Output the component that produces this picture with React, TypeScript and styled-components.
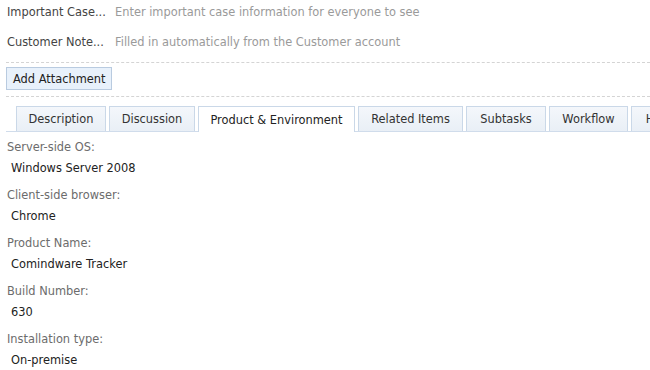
import React from "react";
import styled, { createGlobalStyle } from "styled-components";

const GlobalStyle = createGlobalStyle`
  body {
    margin: 0;
    background: #fff;
    font-family: "DejaVu Sans", Verdana, sans-serif;
    font-size: 11.4px;
    color: #333;
  }
`;

const Page = styled.div`
  width: 650px;
  height: 370px;
  overflow: hidden;
  padding: 0 0 0 6px;
  box-sizing: border-box;
`;

const InfoRow = styled.div`
  display: flex;
  align-items: flex-start;
  height: 30px;
  padding-top: 5px;
  box-sizing: border-box;
  line-height: 14px;
  white-space: nowrap;
`;

const InfoLabel = styled.div`
  width: 108px;
  padding-left: 1px;
  color: #444;
  flex-shrink: 0;
`;

const InfoValue = styled.div`
  color: #9a9a9a;
`;

const Divider = styled.div<{ $top: number }>`
  border-top: 1px dashed #d4d4d4;
  margin: ${(p) => p.$top}px 0 0 0;
`;

const ButtonRow = styled.div`
  padding: 4px 0 6px 0;
`;

const Button = styled.button`
  font-family: inherit;
  font-size: 11.4px;
  color: #222;
  background: #e8f1fb;
  border: 1px solid #b9cbe0;
  border-radius: 0;
  height: 23px;
  padding: 0 6px;
`;

const TabStrip = styled.div`
  display: flex;
  gap: 3px;
  margin-top: 9px;
  padding-left: 10px;
  border-bottom: 1px solid #d0dceb;
  white-space: nowrap;
`;

const Tab = styled.div<{ $active?: boolean; $w: number }>`
  flex-shrink: 0;
  width: ${(p) => p.$w}px;
  box-sizing: border-box;
  display: flex;
  align-items: center;
  justify-content: center;
  border: 1px solid #cad8e8;
  border-bottom: none;
  background: ${(p) =>
    p.$active ? "#fff" : "linear-gradient(#f4f7fb, #e9eff6)"};
  color: ${(p) => (p.$active ? "#222" : "#333")};
  margin-bottom: ${(p) => (p.$active ? "-1px" : "0")};
  height: ${(p) => (p.$active ? "26px" : "25px")};
  overflow: hidden;
`;

const Fields = styled.div`
  padding-top: 8px;
`;

const Field = styled.div`
  height: 48px;
  display: flex;
  flex-direction: column;
`;

const FieldLabel = styled.div`
  color: #6c6c6c;
  padding-left: 1px;
  line-height: 14px;
`;

const FieldValue = styled.div`
  color: #222;
  padding: 7px 0 0 5px;
  line-height: 14px;
`;

const tabs = [
  { name: "Description", w: 90 },
  { name: "Discussion", w: 86 },
  { name: "Product & Environment", w: 157, active: true },
  { name: "Related Items", w: 105 },
  { name: "Subtasks", w: 80 },
  { name: "Workflow", w: 79 },
  { name: "History", w: 70 },
];

const fields = [
  ["Server-side OS:", "Windows Server 2008"],
  ["Client-side browser:", "Chrome"],
  ["Product Name:", "Comindware Tracker"],
  ["Build Number:", "630"],
  ["Installation type:", "On-premise"],
];

export default function App() {
  return (
    <Page>
      <GlobalStyle />
      <InfoRow>
        <InfoLabel>Important Case...</InfoLabel>
        <InfoValue>Enter important case information for everyone to see</InfoValue>
      </InfoRow>
      <InfoRow>
        <InfoLabel>Customer Note...</InfoLabel>
        <InfoValue>Filled in automatically from the Customer account</InfoValue>
      </InfoRow>
      <Divider $top={2} />
      <ButtonRow>
        <Button>Add Attachment</Button>
      </ButtonRow>
      <Divider $top={0} />
      <TabStrip>
        {tabs.map((t) => (
          <Tab key={t.name} $w={t.w} $active={t.active}>
            {t.name}
          </Tab>
        ))}
      </TabStrip>
      <Fields>
        {fields.map(([label, value]) => (
          <Field key={label}>
            <FieldLabel>{label}</FieldLabel>
            <FieldValue>{value}</FieldValue>
          </Field>
        ))}
      </Fields>
    </Page>
  );
}
